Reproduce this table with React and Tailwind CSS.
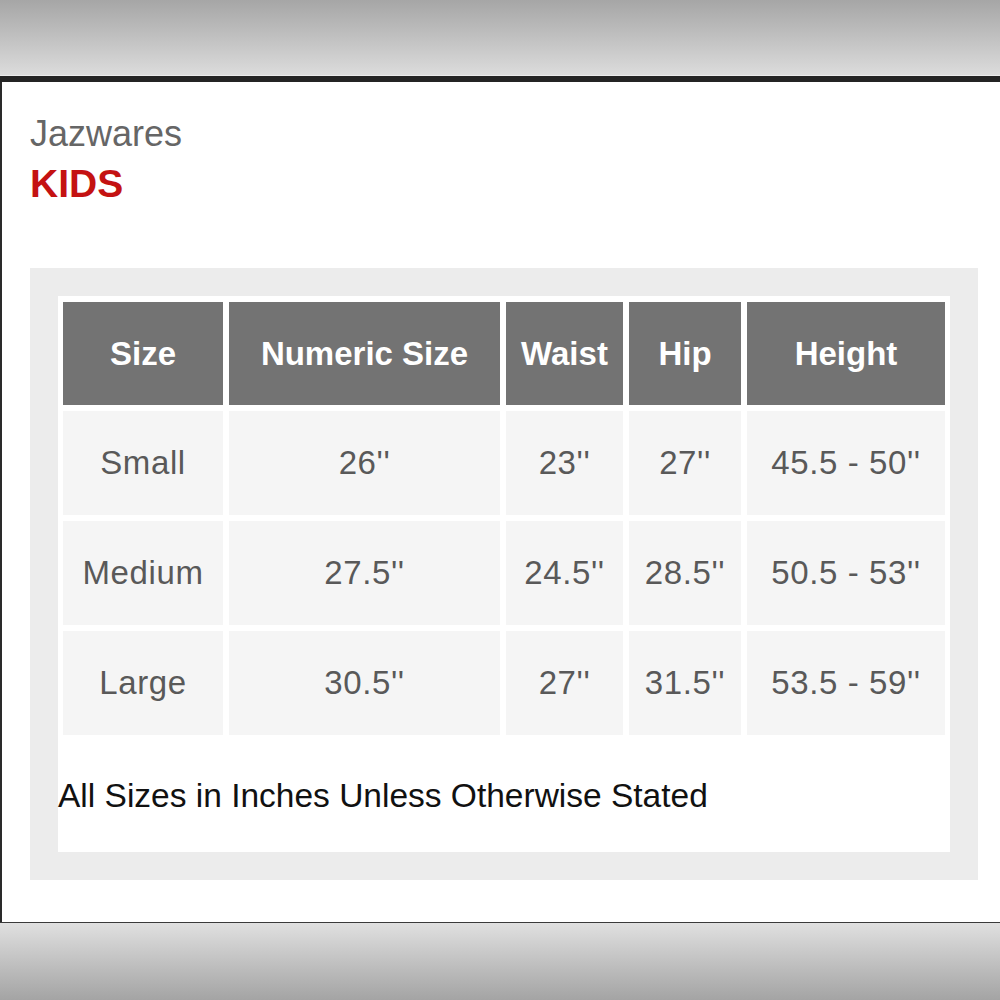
const columns = [
  { label: 'Size', width: 'w-[160px]' },
  { label: 'Numeric Size', width: 'w-[271px]' },
  { label: 'Waist', width: 'w-[117px]' },
  { label: 'Hip', width: 'w-[112px]' },
  { label: 'Height', width: 'w-[198px]' },
];

const rows = [
  ['Small', "26''", "23''", "27''", "45.5 - 50''"],
  ['Medium', "27.5''", "24.5''", "28.5''", "50.5 - 53''"],
  ['Large', "30.5''", "27''", "31.5''", "53.5 - 59''"],
];

export default function App() {
  return (
    <div className="w-[1000px] h-[1000px] flex flex-col overflow-hidden bg-white font-['Liberation_Sans',Arial,sans-serif]">
      {/* top chrome */}
      <div className="h-[75px] shrink-0 bg-gradient-to-b from-[#a6a6a6] to-[#dcdcdc]" />
      <div className="h-px shrink-0 bg-[#ececec]" />
      <div className="h-[6px] shrink-0 bg-[#242424]" />

      <div className="flex-1 flex flex-col border-l-2 border-[#2a2a2a] pl-[28px] pr-[22px] pt-[34px]">
        <div className="text-[36px] leading-none text-[#666]">Jazwares</div>
        <div className="mt-[12px] text-[39px] leading-none font-bold text-[#c41212]">KIDS</div>

        <div className="mt-[65px] bg-[#ececec] p-[28px]">
          <div className="bg-white pt-[6px] pb-[39px]">
            <div className="mx-[5px] flex flex-col gap-[6px]">
              <div className="flex gap-[6px]">
                {columns.map((c) => (
                  <div
                    key={c.label}
                    className={`${c.width} h-[103px] bg-[#737373] flex items-center justify-center text-white font-bold text-[33px]`}
                  >
                    {c.label}
                  </div>
                ))}
              </div>
              {rows.map((r) => (
                <div key={r[0]} className="flex gap-[6px]">
                  {r.map((v, i) => (
                    <div
                      key={i}
                      className={`${columns[i].width} h-[104px] bg-[#f5f5f5] flex items-center justify-center text-[#595959] text-[33px] tracking-[0.6px]`}
                    >
                      {v}
                    </div>
                  ))}
                </div>
              ))}
            </div>
            <div className="mt-[44px] text-[33.5px] leading-[34px] text-[#111]">
              All Sizes in Inches Unless Otherwise Stated
            </div>
          </div>
        </div>
      </div>

      {/* bottom chrome */}
      <div className="h-px shrink-0 bg-[#3a3a3a]" />
      <div className="h-[77px] shrink-0 bg-gradient-to-b from-[#e0e0e0] to-[#a4a4a4]" />
    </div>
  );
}
